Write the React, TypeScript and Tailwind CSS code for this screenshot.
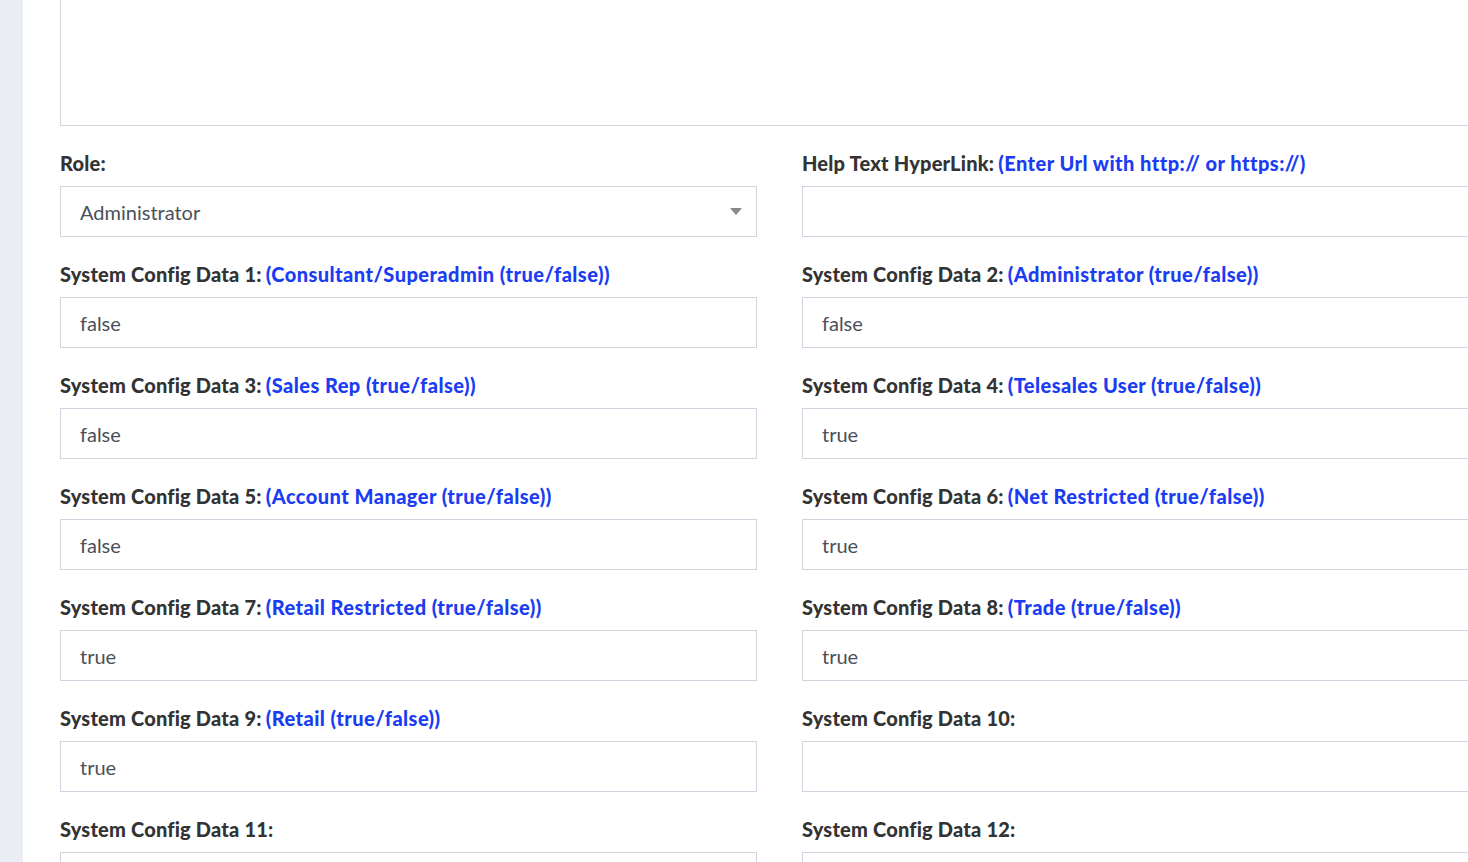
import React from 'react';

type Field = {
  label: string;
  hint?: string;
  value: string;
  select?: boolean;
};

const rows: [Field, Field][] = [
  [
    { label: 'Role:', value: 'Administrator', select: true },
    { label: 'Help Text HyperLink:', hint: '(Enter Url with http:// or https://)', value: '' },
  ],
  [
    { label: 'System Config Data 1:', hint: '(Consultant/Superadmin (true/false))', value: 'false' },
    { label: 'System Config Data 2:', hint: '(Administrator (true/false))', value: 'false' },
  ],
  [
    { label: 'System Config Data 3:', hint: '(Sales Rep (true/false))', value: 'false' },
    { label: 'System Config Data 4:', hint: '(Telesales User (true/false))', value: 'true' },
  ],
  [
    { label: 'System Config Data 5:', hint: '(Account Manager (true/false))', value: 'false' },
    { label: 'System Config Data 6:', hint: '(Net Restricted (true/false))', value: 'true' },
  ],
  [
    { label: 'System Config Data 7:', hint: '(Retail Restricted (true/false))', value: 'true' },
    { label: 'System Config Data 8:', hint: '(Trade (true/false))', value: 'true' },
  ],
  [
    { label: 'System Config Data 9:', hint: '(Retail (true/false))', value: 'true' },
    { label: 'System Config Data 10:', value: '' },
  ],
  [
    { label: 'System Config Data 11:', value: '' },
    { label: 'System Config Data 12:', value: '' },
  ],
];

function FormField({ field }: { field: Field }) {
  return (
    <div className="w-[697px] shrink-0">
      <label className="block h-[24px] text-[20px] leading-[24px] font-black tracking-[0.2px] text-[#333333] whitespace-nowrap">
        {field.label}
        {field.hint && <span className="ml-[4px] tracking-[0.45px] text-[#1a3cf2]">{field.hint}</span>}
      </label>
      <div className="relative mt-[11px] flex h-[51px] items-center border border-[#d1d3de] bg-white pl-[19px] text-[20px] text-[#4a5058]">
        {field.value}
        {field.select && (
          <svg
            className="absolute right-[14px] top-[21px]"
            width="12"
            height="7"
            viewBox="0 0 12 7"
          >
            <path d="M0 0 L12 0 L6 7 Z" fill="#888888" />
          </svg>
        )}
      </div>
    </div>
  );
}

export default function App() {
  return (
    <div
      className="flex h-[862px] w-[1468px] overflow-hidden bg-white"
      style={{ fontFamily: 'Lato, "Noto Sans", sans-serif' }}
    >
      {/* Side strip */}
      <div className="w-[23px] shrink-0 bg-[#eaedf2]" />

      {/* Form content */}
      <div className="flex-1 pl-[37px]">
        <div className="-mt-[24px] h-[150px] w-[1440px] border border-[#d1d3de]" />

        <div className="mt-[25px] flex flex-col gap-[25px]">
          {rows.map(([a, b], i) => (
            <div key={i} className="flex gap-[45px]">
              <FormField field={a} />
              <FormField field={b} />
            </div>
          ))}
        </div>
      </div>
    </div>
  );
}
